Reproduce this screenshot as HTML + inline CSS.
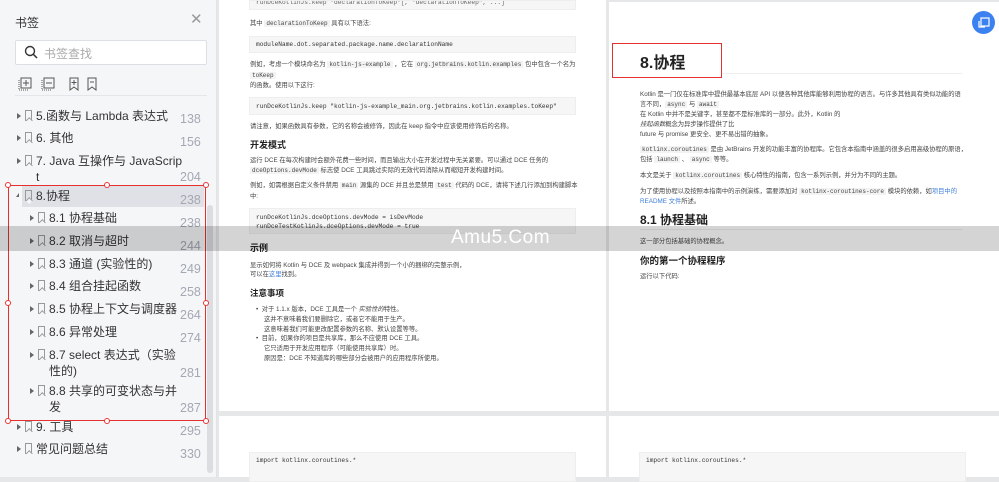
<!DOCTYPE html>
<html><head><meta charset="utf-8"><style>
*{margin:0;padding:0;box-sizing:border-box}
body{width:999px;height:477px;overflow:hidden;background:#e6e7e9;font-family:"Liberation Sans","Noto Sans CJK SC",sans-serif;position:relative}
.abs{position:absolute}
#side{left:0;top:0;width:217px;height:477px;background:#f5f6f8;border-right:1px solid #e2e3e6}
.it{position:absolute;font-size:12px;color:#333;white-space:nowrap;line-height:16px}
.num{position:absolute;left:180px;font-size:12.5px;color:#a3a8b3}
.tri{position:absolute;width:0;height:0;border-top:3.5px solid transparent;border-bottom:3.5px solid transparent;border-left:4px solid #666}
.bm{position:absolute;width:7px;height:11px;border:1.3px solid #999;border-bottom:none}
.bm:after{content:"";position:absolute;left:0.5px;bottom:-1px;width:3.5px;height:3.5px;border-left:1.3px solid #999;border-top:1.3px solid #999;transform:rotate(45deg);background:#f5f6f8}
.page{position:absolute;background:#fff}
.clip{position:absolute;overflow:hidden}
.t{position:absolute;font-size:6.3px;color:#444;white-space:nowrap;line-height:10px}
.code{position:absolute;background:#f6f6f6;border:1px solid #eee;font-family:"Liberation Mono",monospace;font-size:6.2px;color:#333;padding:0 6px;white-space:nowrap;overflow:hidden}
.m{font-family:"Liberation Mono",monospace;background:#f3f3f3;padding:0 2px;font-size:6px}
.h{position:absolute;font-weight:bold;color:#222;white-space:nowrap}
.hd{position:absolute;width:6px;height:6px;border:1px solid #e33;background:#fff;border-radius:50%}
a{color:#3b7ddd}
</style></head><body>
<div id="side" class="abs">
 <div class="abs" style="left:15px;top:14px;font-size:12px;color:#333">书签</div>
 <div class="abs" style="left:190px;top:10px;font-size:15px;color:#999">✕</div>
 <div class="abs" style="left:15px;top:40px;width:192px;height:25px;background:#fff;border:1px solid #dcdfe4;border-radius:2px"></div>
 <svg class="abs" style="left:24px;top:45px" width="14" height="14"><circle cx="6" cy="6" r="4.5" stroke="#333" stroke-width="1.4" fill="none"/><line x1="9.3" y1="9.3" x2="13" y2="13" stroke="#333" stroke-width="1.5"/></svg>
 <div class="abs" style="left:44px;top:45px;font-size:12px;color:#aaa">书签查找</div>
 <svg class="abs" style="left:18px;top:76px" width="90" height="16" fill="none" stroke="#555" stroke-width="1">
  <rect x="3" y="2" width="10" height="10"/><line x1="8" y1="4" x2="8" y2="10"/><line x1="5" y1="7" x2="11" y2="7"/><line x1="1" y1="4" x2="1" y2="14" stroke-dasharray="1 1"/><line x1="1" y1="14" x2="11" y2="14" stroke-dasharray="1 1"/>
  <rect x="26" y="2" width="10" height="10"/><line x1="28" y1="7" x2="34" y2="7"/><line x1="24" y1="4" x2="24" y2="14" stroke-dasharray="1 1"/><line x1="24" y1="14" x2="34" y2="14" stroke-dasharray="1 1"/>
  <path d="M52 2h8v12l-4-3-4 3z"/><line x1="56" y1="4" x2="56" y2="9"/><line x1="53.5" y1="6.5" x2="58.5" y2="6.5"/>
  <path d="M70 2h8v12l-4-3-4 3z"/><line x1="72" y1="6" x2="76" y2="6"/>
 </svg>
 <div class="abs" style="left:15px;top:95px;width:192px;height:1px;background:#e4e6ea"></div>
 <div class="abs" style="left:22px;top:186px;width:182px;height:21px;background:#dfe1e6"></div>
 <div class="abs" style="left:207px;top:205px;width:6px;height:268px;background:#dcdde0;border-radius:3px"></div>

 <div class="tri" style="left:17px;top:113px"></div><div class="bm" style="left:25px;top:110px"></div><div class="it" style="left:36px;top:108px">5.函数与 Lambda 表达式</div><div class="num" style="top:112px">138</div>
 <div class="tri" style="left:17px;top:135px"></div><div class="bm" style="left:25px;top:132px"></div><div class="it" style="left:36px;top:130px">6. 其他</div><div class="num" style="top:135px">156</div>
 <div class="tri" style="left:17px;top:158px"></div><div class="bm" style="left:25px;top:155px"></div><div class="it" style="left:36px;top:153px">7. Java 互操作与 JavaScrip<br>t</div><div class="num" style="top:170px">204</div>
 <div class="abs" style="left:16px;top:193px;width:0;height:0;border-left:3.5px solid transparent;border-bottom:4px solid #666"></div><div class="bm" style="left:25px;top:190px"></div><div class="it" style="left:36px;top:188px">8.协程</div><div class="num" style="top:193px">238</div>
 <div class="tri" style="left:30px;top:215px"></div><div class="bm" style="left:38px;top:212px"></div><div class="it" style="left:49px;top:210px">8.1 协程基础</div><div class="num" style="top:216px">238</div>
 <div class="tri" style="left:30px;top:238px"></div><div class="bm" style="left:38px;top:235px"></div><div class="it" style="left:49px;top:233px">8.2 取消与超时</div><div class="num" style="top:239px">244</div>
 <div class="tri" style="left:30px;top:261px"></div><div class="bm" style="left:38px;top:258px"></div><div class="it" style="left:49px;top:256px">8.3 通道 (实验性的)</div><div class="num" style="top:262px">249</div>
 <div class="tri" style="left:30px;top:283px"></div><div class="bm" style="left:38px;top:280px"></div><div class="it" style="left:49px;top:278px">8.4 组合挂起函数</div><div class="num" style="top:285px">258</div>
 <div class="tri" style="left:30px;top:306px"></div><div class="bm" style="left:38px;top:303px"></div><div class="it" style="left:49px;top:301px">8.5 协程上下文与调度器</div><div class="num" style="top:308px">264</div>
 <div class="tri" style="left:30px;top:329px"></div><div class="bm" style="left:38px;top:326px"></div><div class="it" style="left:49px;top:324px">8.6 异常处理</div><div class="num" style="top:331px">274</div>
 <div class="tri" style="left:30px;top:352px"></div><div class="bm" style="left:38px;top:349px"></div><div class="it" style="left:49px;top:347px">8.7 select 表达式（实验<br>性的)</div><div class="num" style="top:366px">281</div>
 <div class="tri" style="left:30px;top:388px"></div><div class="bm" style="left:38px;top:385px"></div><div class="it" style="left:49px;top:383px">8.8 共享的可变状态与并<br>发</div><div class="num" style="top:401px">287</div>
 <div class="tri" style="left:17px;top:424px"></div><div class="bm" style="left:25px;top:421px"></div><div class="it" style="left:36px;top:419px">9. 工具</div><div class="num" style="top:424px">295</div>
 <div class="tri" style="left:17px;top:446px"></div><div class="bm" style="left:25px;top:443px"></div><div class="it" style="left:36px;top:441px">常见问题总结</div><div class="num" style="top:447px">330</div>

 <div class="abs" style="left:8px;top:185px;width:198px;height:236px;border:1px solid #e63030"></div>
 <div class="hd" style="left:5px;top:182px"></div><div class="hd" style="left:104px;top:182px"></div><div class="hd" style="left:203px;top:182px"></div>
 <div class="hd" style="left:5px;top:300px"></div><div class="hd" style="left:203px;top:300px"></div>
 <div class="hd" style="left:5px;top:418px"></div><div class="hd" style="left:104px;top:418px"></div><div class="hd" style="left:203px;top:418px"></div>
</div>

<!-- left page -->
<div class="page" style="left:219px;top:0;width:387px;height:411px"></div>
<div class="page" style="left:219px;top:416px;width:387px;height:61px"></div>
<div class="clip" style="left:219px;top:0;width:387px;height:411px">
<div class="code" style="left:30px;top:0;width:327px;height:10px;line-height:4px;color:#666">runDceKotlinJs.keep "declarationToKeep"[, "declarationToKeep", ...]</div>
<div class="t" style="left:31px;top:19px">其中 <span class="m">declarationToKeep</span> 具有以下语法:</div>
<div class="code" style="left:30px;top:36px;width:327px;height:17px;line-height:16px">moduleName.dot.separated.package.name.declarationName</div>
<div class="t" style="left:31px;top:60px">例如，考虑一个模块命名为 <span class="m">kotlin-js-example</span> ，它在 <span class="m">org.jetbrains.kotlin.examples</span> 包中包含一个名为</div>
<div class="t" style="left:31px;top:71px"><span class="m">toKeep</span></div>
<div class="t" style="left:31px;top:81px">的函数。使用以下这行:</div>
<div class="code" style="left:30px;top:97px;width:327px;height:18px;line-height:17px">runDceKotlinJs.keep "kotlin-js-example_main.org.jetbrains.kotlin.examples.toKeep"</div>
<div class="t" style="left:31px;top:122px">请注意，如果函数具有参数，它的名称会被修饰，因此在 keep 指令中应该使用修饰后的名称。</div>
<div class="h" style="left:31px;top:138px;font-size:9px">开发模式</div>
<div class="t" style="left:31px;top:156px">运行 DCE 在每次构建时会额外花费一些时间，而且输出大小在开发过程中无关紧要。可以通过 DCE 任务的</div>
<div class="t" style="left:31px;top:166px"><span class="m">dceOptions.devMode</span> 标志使 DCE 工具跳过实际的无效代码消除从而缩短开发构建时间。</div>
<div class="t" style="left:31px;top:181px">例如，如需根据自定义条件禁用 <span class="m">main</span> 源集的 DCE 并且总是禁用 <span class="m">test</span> 代码的 DCE，请将下述几行添加到构建脚本</div>
<div class="t" style="left:31px;top:192px">中:</div>
<div class="code" style="left:30px;top:208px;width:327px;height:26px;line-height:9px;padding-top:4px">runDceKotlinJs.dceOptions.devMode = isDevMode<br>runDceTestKotlinJs.dceOptions.devMode = true</div>
<div class="h" style="left:31px;top:241px;font-size:9px">示例</div>
<div class="t" style="left:31px;top:261px">显示如何将 Kotlin 与 DCE 及 webpack 集成并得到一个小的捆绑的完整示例，</div>
<div class="t" style="left:31px;top:270px">可以在<a>这里</a>找到。</div>
<div class="h" style="left:31px;top:287px;font-size:8.5px">注意事项</div>
<div class="t" style="left:37px;top:305px">•&nbsp; 对于 1.1.x 版本，DCE 工具是一个 <i>实验性的</i>特性。</div>
<div class="t" style="left:45px;top:315px">这并不意味着我们要删除它，或者它不能用于生产。</div>
<div class="t" style="left:45px;top:325px">这意味着我们可能更改配置参数的名称、默认设置等等。</div>
<div class="t" style="left:37px;top:334px">•&nbsp; 目前，如果你的项目是共享库，那么不应使用 DCE 工具。</div>
<div class="t" style="left:45px;top:344px">它只适用于开发应用程序（可能使用共享库）时。</div>
<div class="t" style="left:45px;top:354px">原因是：DCE 不知道库的哪些部分会被用户的应用程序所使用。</div>
</div>
<div class="code" style="left:249px;top:452px;width:327px;height:30px;line-height:16px">import kotlinx.coroutines.*</div>

<!-- right page -->
<div class="page" style="left:609px;top:2px;width:390px;height:409px"></div>
<div class="page" style="left:609px;top:416px;width:390px;height:61px"></div>
<div class="abs" style="left:972px;top:11px;width:23px;height:23px;border-radius:50%;background:#3b82f0"></div>
<svg class="abs" style="left:976px;top:15px" width="15" height="15" fill="none" stroke="#fff" stroke-width="1.2"><rect x="5" y="3" width="8" height="8"/><path d="M3 6v6h6"/></svg>
<div class="h" style="left:640px;top:49px;font-size:16px">8.协程</div>
<div class="abs" style="left:612px;top:43px;width:110px;height:35px;border:1.5px solid #e63030"></div>
<div class="abs" style="left:722px;top:73px;width:240px;height:1px;background:#eee"></div>
<div class="clip" style="left:609px;top:80px;width:360px;height:200px">
<div class="t" style="left:31px;top:10px">Kotlin 是一门仅在标准库中提供最基本底层 API 以便各种其他库能够利用协程的语言。与许多其他具有类似功能的语</div>
<div class="t" style="left:31px;top:20px">言不同，<span class="m">async</span> 与 <span class="m">await</span></div>
<div class="t" style="left:31px;top:30px">在 Kotlin 中并不是关键字，甚至都不是标准库的一部分。此外，Kotlin 的</div>
<div class="t" style="left:31px;top:40px"><i>挂起函数</i>概念为异步操作提供了比</div>
<div class="t" style="left:31px;top:50px">future 与 promise 更安全、更不易出错的抽象。</div>
<div class="t" style="left:31px;top:65px"><span class="m">kotlinx.coroutines</span> 是由 JetBrains 开发的功能丰富的协程库。它包含本指南中涵盖的很多启用高级协程的原语，</div>
<div class="t" style="left:31px;top:75px">包括 <span class="m">launch</span> 、 <span class="m">async</span> 等等。</div>
<div class="t" style="left:31px;top:91px">本文是关于 <span class="m">kotlinx.coroutines</span> 核心特性的指南，包含一系列示例，并分为不同的主题。</div>
<div class="t" style="left:31px;top:107px">为了使用协程以及按照本指南中的示例演练，需要添加对 <span class="m">kotlinx-coroutines-core</span> 模块的依赖，如<a>项目中的</a></div>
<div class="t" style="left:31px;top:117px"><a>README 文件</a>所述。</div>
</div>
<div class="h" style="left:640px;top:211px;font-size:12px">8.1 协程基础</div>
<div class="abs" style="left:640px;top:229px;width:322px;height:1px;background:#eee"></div>
<div class="t" style="left:640px;top:237px">这一部分包括基础的协程概念。</div>
<div class="h" style="left:640px;top:253px;font-size:9.5px">你的第一个协程程序</div>
<div class="t" style="left:640px;top:272px">运行以下代码:</div>
<div class="code" style="left:639px;top:452px;width:327px;height:30px;line-height:16px">import kotlinx.coroutines.*</div>

<!-- watermark band -->
<div class="abs" style="left:0;top:226px;width:999px;height:25px;background:rgba(0,0,0,0.17)"></div>
<div class="abs" style="left:451px;top:227px;font-size:19px;color:#fff;letter-spacing:0.5px">Amu5.Com</div>
</body></html>
